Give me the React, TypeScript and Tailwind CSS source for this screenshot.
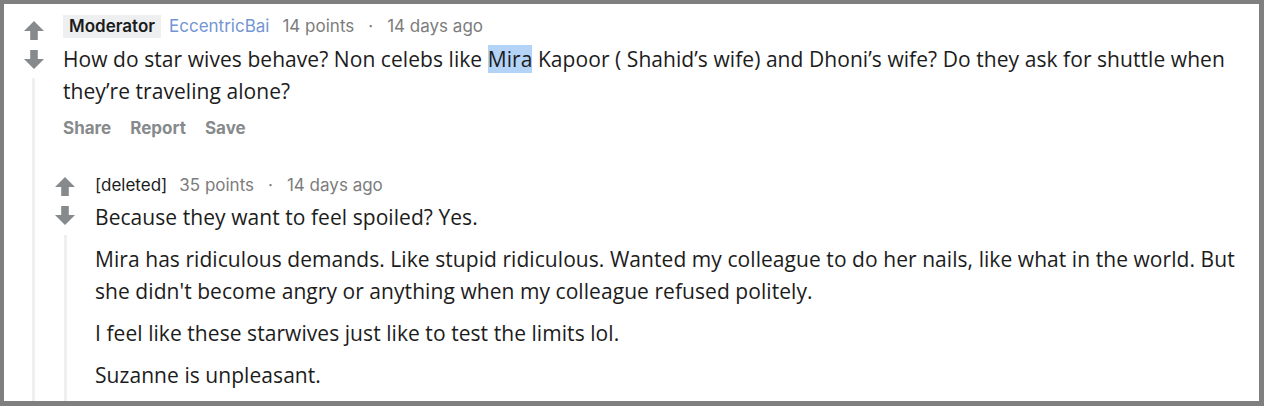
const meta = "font-['Inter','Roboto',sans-serif]";
const body = "font-['Open_Sans','Noto_Sans',sans-serif] tracking-[0.06px]";

const Arrow = ({ down = false }: { down?: boolean }) => (
  <svg width="20" height="20" viewBox="0 0 20 20" className={down ? 'rotate-180' : ''}>
    <path d="M10 1 L20 11 H13.8 V20 H6.2 V11 H0 Z" fill="#878a8c" />
  </svg>
);

const Votes = ({ top, line }: { top: string; line: string }) => (
  <div className={`flex flex-col items-center ${top}`}>
    <Arrow />
    <div className="mt-[10px]">
      <Arrow down />
    </div>
    <div className={`flex-1 w-[3px] bg-[#edeff1] ${line}`} />
  </div>
);

export default function App() {
  return (
    <div className="h-[406px] overflow-hidden bg-white border-[#7f7f7f] border-t-4 border-l-4 border-r-[5px] border-b-[5px] flex pr-[10px]">
      <div className="w-[59px] flex">
        <div className="w-full flex flex-col">
          <Votes top="pt-[16px] h-full" line="mt-[8px]" />
        </div>
      </div>

      <div className="flex-1 pt-[11px] text-[#1c1c1c]">
        <div className={`${meta} flex items-center h-[23px] text-[17px]`}>
          <span className="bg-[#edeff1] px-[6px] h-[23px] flex items-center font-semibold text-[#1c1c1c]">
            Moderator
          </span>
          <span className="ml-[8px] text-[#7395d6]">EccentricBai</span>
          <span className="ml-[13px] text-[#7c7c7c]">14 points</span>
          <span className="mx-[14px] text-[#7c7c7c]">·</span>
          <span className="text-[#7c7c7c]">14 days ago</span>
        </div>

        <p className={`${body} mt-[5px] text-[21px] leading-[32px]`}>
          How do star wives behave? Non celebs like <span className="bg-[#b4d4f7]">Mira</span> Kapoor ( Shahid’s wife) and Dhoni’s wife? Do they ask for shuttle when they’re traveling alone?
        </p>

        <div className={`${meta} mt-[9px] flex gap-[19px] text-[17px] leading-[24px] font-bold text-[#878a8c]`}>
          <span>Share</span>
          <span>Report</span>
          <span>Save</span>
        </div>

        <div className="mt-[34px] -ml-[17px] flex h-[240px]">
          <div className="w-[38px] flex flex-col">
            <Votes top="pt-[2px] h-full" line="mt-[9px]" />
          </div>
          <div className="flex-1 ml-[11px]">
            <div className={`${meta} flex items-center h-[23px] text-[17px]`}>
              <span className="text-[#1c1c1c]">[deleted]</span>
              <span className="ml-[12px] text-[#7c7c7c]">35 points</span>
              <span className="mx-[14px] text-[#7c7c7c]">·</span>
              <span className="text-[#7c7c7c]">14 days ago</span>
            </div>
            <div className={`${body} mt-[4px] text-[21px] leading-[32px] flex flex-col gap-[10px]`}>
              <p>Because they want to feel spoiled? Yes.</p>
              <p>
                Mira has ridiculous demands. Like stupid ridiculous. Wanted my colleague to do her nails, like what in the world. But she didn't become angry or anything when my colleague refused politely.
              </p>
              <p>I feel like these starwives just like to test the limits lol.</p>
              <p>Suzanne is unpleasant.</p>
            </div>
          </div>
        </div>
      </div>
    </div>
  );
}
